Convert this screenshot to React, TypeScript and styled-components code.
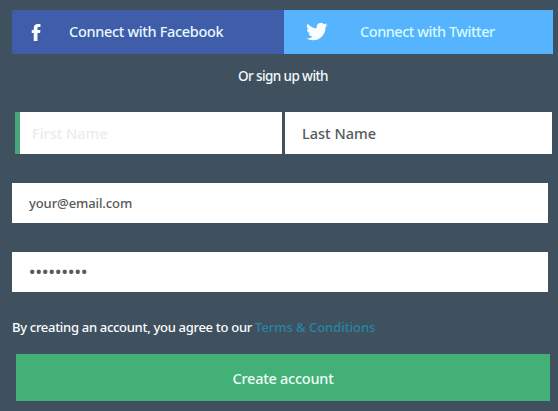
import React from "react";
import styled, { createGlobalStyle } from "styled-components";

const GlobalStyle = createGlobalStyle`
  *, *::before, *::after { box-sizing: border-box; }
  html, body { margin: 0; background: #3f515f; }
  body, input, button { font-family: "Noto Sans", "Open Sans", sans-serif; font-weight: 500; }
`;

const Form = styled.form`
  display: flex;
  flex-direction: column;
  width: 558px;
  height: 411px;
  padding: 10px 5px 0 12px;
  overflow: hidden;
  background: #3f515f;
`;

const SocialRow = styled.div`
  display: grid;
  grid-template-columns: 272px 269px;
  height: 44px;
`;

const SocialButton = styled.button<{ $color: string; $ink: string; $iconWidth: number; $spacing: number }>`
  display: grid;
  grid-template-columns: ${(p) => p.$iconWidth}px auto;
  align-items: center;
  justify-content: start;
  padding: 0 0 0 19px;
  border: 0;
  background: ${(p) => p.$color};
  color: ${(p) => p.$ink};
  font-size: 14.5px;
  letter-spacing: ${(p) => p.$spacing}px;
  line-height: 20px;
  white-space: nowrap;
`;

const Label = styled.span`
  padding-bottom: 2px;
`;

const Divider = styled.p`
  margin: 12px 0 0 226px;
  color: #f4fafb;
  font-size: 13.5px;
  line-height: 21px;
  letter-spacing: -0.6px;
  white-space: nowrap;
`;

const NameRow = styled.div`
  display: grid;
  grid-template-columns: 267px 267px;
  gap: 3px;
  height: 42px;
  margin: 25px 0 0 3px;
`;

const NameInput = styled.input<{ $active?: boolean }>`
  min-width: 0;
  height: 42px;
  padding: 0 0 1px ${(p) => (p.$active ? 12 : 17)}px;
  border: 0;
  border-left: ${(p) => (p.$active ? "5px solid #48a67b" : "0")};
  border-radius: 0;
  outline: 0;
  background: #fff;
  font-size: 14.5px;
  &::placeholder {
    color: ${(p) => (p.$active ? "#ebedec" : "#555a5a")};
    opacity: 1;
  }
`;

const WideInput = styled.input<{ $size: number; $spacing: number }>`
  width: 536px;
  height: 40px;
  flex: none;
  margin-top: 29px;
  padding: 0 17px;
  border: 0;
  border-radius: 0;
  outline: 0;
  background: #fff;
  color: #555a5a;
  font-size: ${(p) => p.$size}px;
  letter-spacing: ${(p) => p.$spacing}px;
`;

const PasswordInput = styled(WideInput)`
  padding-bottom: 2px;
`;

const Terms = styled.p`
  margin: 25px 0 0;
  color: #fafdfe;
  font-size: 13px;
  line-height: 21px;
  letter-spacing: -0.3px;
  white-space: nowrap;
`;

const TermsLink = styled.a`
  color: #2686a4;
  letter-spacing: -0.05px;
`;

const Submit = styled.button`
  width: 534px;
  height: 47px;
  flex: none;
  margin: 16px 0 0 4px;
  padding: 1px 0 0;
  border: 0;
  background: #43b078;
  color: #ecfff6;
  font-size: 14.5px;
  letter-spacing: -0.25px;
`;

const Icon = styled.svg`
  display: block;
  fill: #fafdff;
`;

export default function App() {
  return (
    <>
      <GlobalStyle />
      <Form onSubmit={(e) => e.preventDefault()}>
        <SocialRow>
          <SocialButton type="button" $color="#405da9" $ink="#e7f8ff" $iconWidth={38} $spacing={-0.33}>
            <Icon width="10" height="17" viewBox="-.5 0 9.5 17">
              <path d="M2 17V9H0V6h2V4.2C2 1.5 3.5 0 6 0h2.7v3.1H7C6 3.1 5.7 3.5 5.7 4.4V6h3l-.4 3H5.7v8z" />
            </Icon>
            <Label>Connect with Facebook</Label>
          </SocialButton>
          <SocialButton type="button" $color="#55b4fd" $ink="#d5fbff" $iconWidth={57} $spacing={-0.47}>
            <Icon width="26" height="20" viewBox="-3.5 1.5 29 22">
              <path d="M23.95 4.57a10 10 0 0 1-2.82.77 4.96 4.96 0 0 0 2.16-2.72c-.95.55-2 .95-3.13 1.18a4.92 4.92 0 0 0-8.38 4.48C7.69 8.1 4.07 6.13 1.64 3.16a4.92 4.92 0 0 0 1.52 6.57 4.9 4.9 0 0 1-2.23-.61v.06a4.92 4.92 0 0 0 3.95 4.83 5 5 0 0 1-2.21.08 4.94 4.94 0 0 0 4.6 3.42A9.87 9.87 0 0 1 0 19.54a13.99 13.99 0 0 0 7.56 2.21c9.05 0 14-7.5 14-13.98 0-.21 0-.42-.02-.63a9.94 9.94 0 0 0 2.41-2.57z" />
            </Icon>
            <Label>Connect with Twitter</Label>
          </SocialButton>
        </SocialRow>
        <Divider>Or sign up with</Divider>
        <NameRow>
          <NameInput $active placeholder="First Name" />
          <NameInput placeholder="Last Name" />
        </NameRow>
        <WideInput $size={13} $spacing={-0.1} defaultValue="your@email.com" />
        <PasswordInput $size={17} $spacing={0.12} type="password" defaultValue="signup123" />
        <Terms>
          By creating an account, you agree to our <TermsLink>Terms &amp; Conditions</TermsLink>
        </Terms>
        <Submit type="submit">Create account</Submit>
      </Form>
    </>
  );
}
